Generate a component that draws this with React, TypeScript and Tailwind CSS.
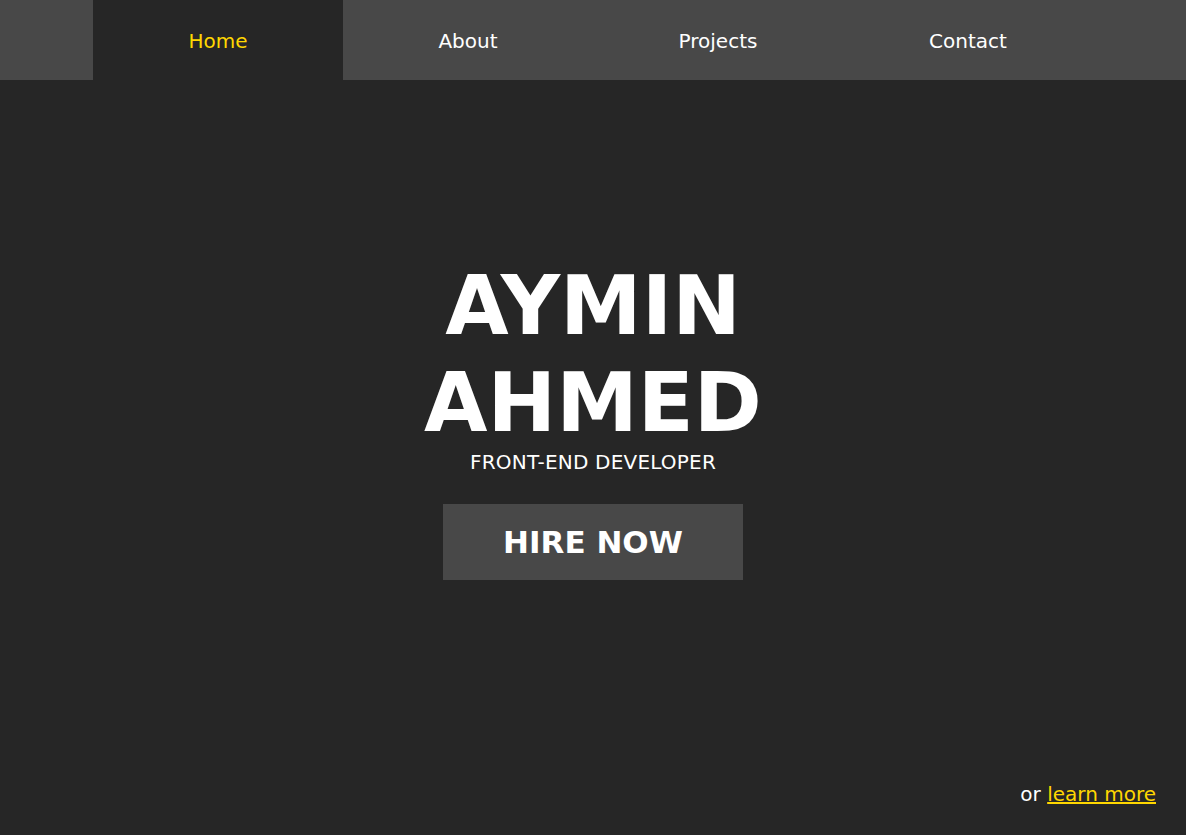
import React from "react";

export default function App() {
  const items = ["Home", "About", "Projects", "Contact"];
  return (
    <div
      className="h-screen flex flex-col bg-[#262626] text-white overflow-hidden"
      style={{ fontFamily: '"DejaVu Sans", Verdana, sans-serif' }}
    >
      <nav className="h-20 bg-[#484848] flex justify-center shrink-0">
        {items.map((it, i) => (
          <a
            key={it}
            href="#"
            className={
              i === 0
                ? "w-[250px] h-full flex items-center justify-center pt-[2px] text-[20px] bg-[#262626] text-[#ffd700]"
                : "w-[250px] h-full flex items-center justify-center pt-[2px] text-[20px] text-white"
            }
          >
            {it}
          </a>
        ))}
      </nav>
      <main className="flex-1 flex flex-col items-center pt-[177px]">
        <h1 className="text-[82px] font-bold text-center leading-[97px] w-[400px]">
          AYMIN AHMED
        </h1>
        <p className="text-[20px] leading-[23px] tracking-[0.2px]">FRONT-END DEVELOPER</p>
        <button className="mt-[30px] w-[300px] h-[76px] bg-[#484848] text-[31px] font-bold text-white">
          HIRE NOW
        </button>
      </main>
      <footer className="flex justify-end pr-[30px] pb-[29px] text-[20px] leading-[23px]">
        <span>
          or{" "}
          <a href="#" className="text-[#ffd700] underline">
            learn more
          </a>
        </span>
      </footer>
    </div>
  );
}
